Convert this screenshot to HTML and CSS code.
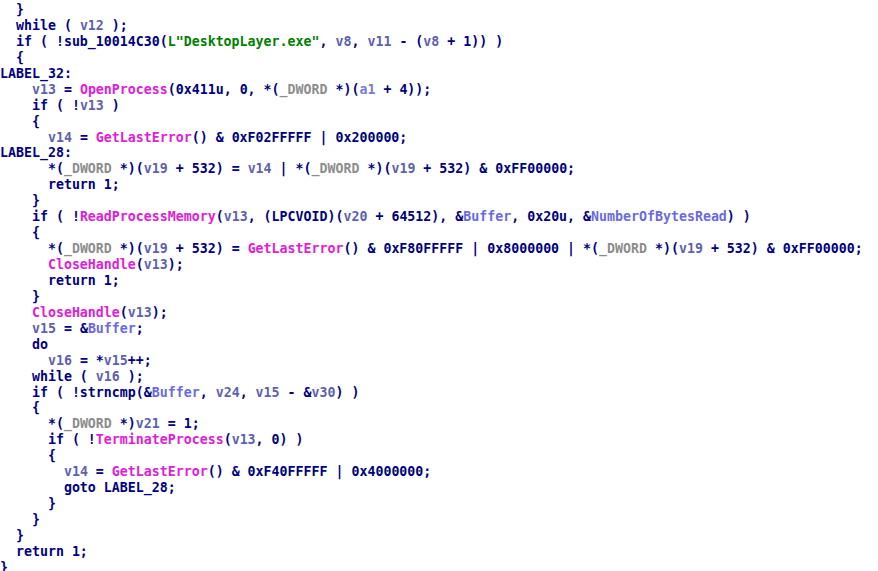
FILE: index.html
```html
<!DOCTYPE html>
<html>
<head>
<meta charset="utf-8">
<link rel="stylesheet" href="styles.css">
</head>
<body>
<pre class="code">  }
  while ( <span class="v">v12</span> );
  if ( !sub_10014C30(<span class="s">L"DesktopLayer.exe"</span>, <span class="v">v8</span>, <span class="v">v11</span> - (<span class="v">v8</span> + 1)) )
  {
LABEL_32:
    <span class="v">v13</span> = <span class="f">OpenProcess</span>(0x411u, 0, *(<span class="t">_DWORD</span> *)(<span class="a">a1</span> + 4));
    if ( !<span class="v">v13</span> )
    {
      <span class="v">v14</span> = <span class="f">GetLastError</span>() &amp; 0xF02FFFFF | 0x200000;
LABEL_28:
      *(<span class="t">_DWORD</span> *)(<span class="v">v19</span> + 532) = <span class="v">v14</span> | *(<span class="t">_DWORD</span> *)(<span class="v">v19</span> + 532) &amp; 0xFF00000;
      return 1;
    }
    if ( !<span class="f">ReadProcessMemory</span>(<span class="v">v13</span>, (LPCVOID)(<span class="v">v20</span> + 64512), &amp;<span class="g">Buffer</span>, 0x20u, &amp;<span class="g">NumberOfBytesRead</span>) )
    {
      *(<span class="t">_DWORD</span> *)(<span class="v">v19</span> + 532) = <span class="f">GetLastError</span>() &amp; 0xF80FFFFF | 0x8000000 | *(<span class="t">_DWORD</span> *)(<span class="v">v19</span> + 532) &amp; 0xFF00000;
      <span class="f">CloseHandle</span>(<span class="v">v13</span>);
      return 1;
    }
    <span class="f">CloseHandle</span>(<span class="v">v13</span>);
    <span class="v">v15</span> = &amp;<span class="g">Buffer</span>;
    do
      <span class="v">v16</span> = *<span class="v">v15</span>++;
    while ( <span class="v">v16</span> );
    if ( !strncmp(&amp;<span class="g">Buffer</span>, <span class="v">v24</span>, <span class="v">v15</span> - &amp;<span class="v">v30</span>) )
    {
      *(<span class="t">_DWORD</span> *)<span class="v">v21</span> = 1;
      if ( !<span class="f">TerminateProcess</span>(<span class="v">v13</span>, 0) )
      {
        <span class="v">v14</span> = <span class="f">GetLastError</span>() &amp; 0xF40FFFFF | 0x4000000;
        goto LABEL_28;
      }
    }
  }
  return 1;
}</pre>
</body>
</html>
```
FILE: styles.css
```css
html, body {
  margin: 0;
  padding: 0;
  background: #ffffff;
}
.code {
  margin: 0;
  padding: 2px 0 0 0;
  font-family: "DejaVu Sans Mono", "Liberation Mono", monospace;
  font-weight: bold;
  font-size: 13.28px;
  line-height: 15.94px;
  color: #000080;
  white-space: pre;
}
.v { color: #5f5fb0; }
.a { color: #7a7ad0; }
.g { color: #6a6ae0; }
.f { color: #e020d8; }
.s { color: #008000; }
.t { color: #8c8c8c; }
```
